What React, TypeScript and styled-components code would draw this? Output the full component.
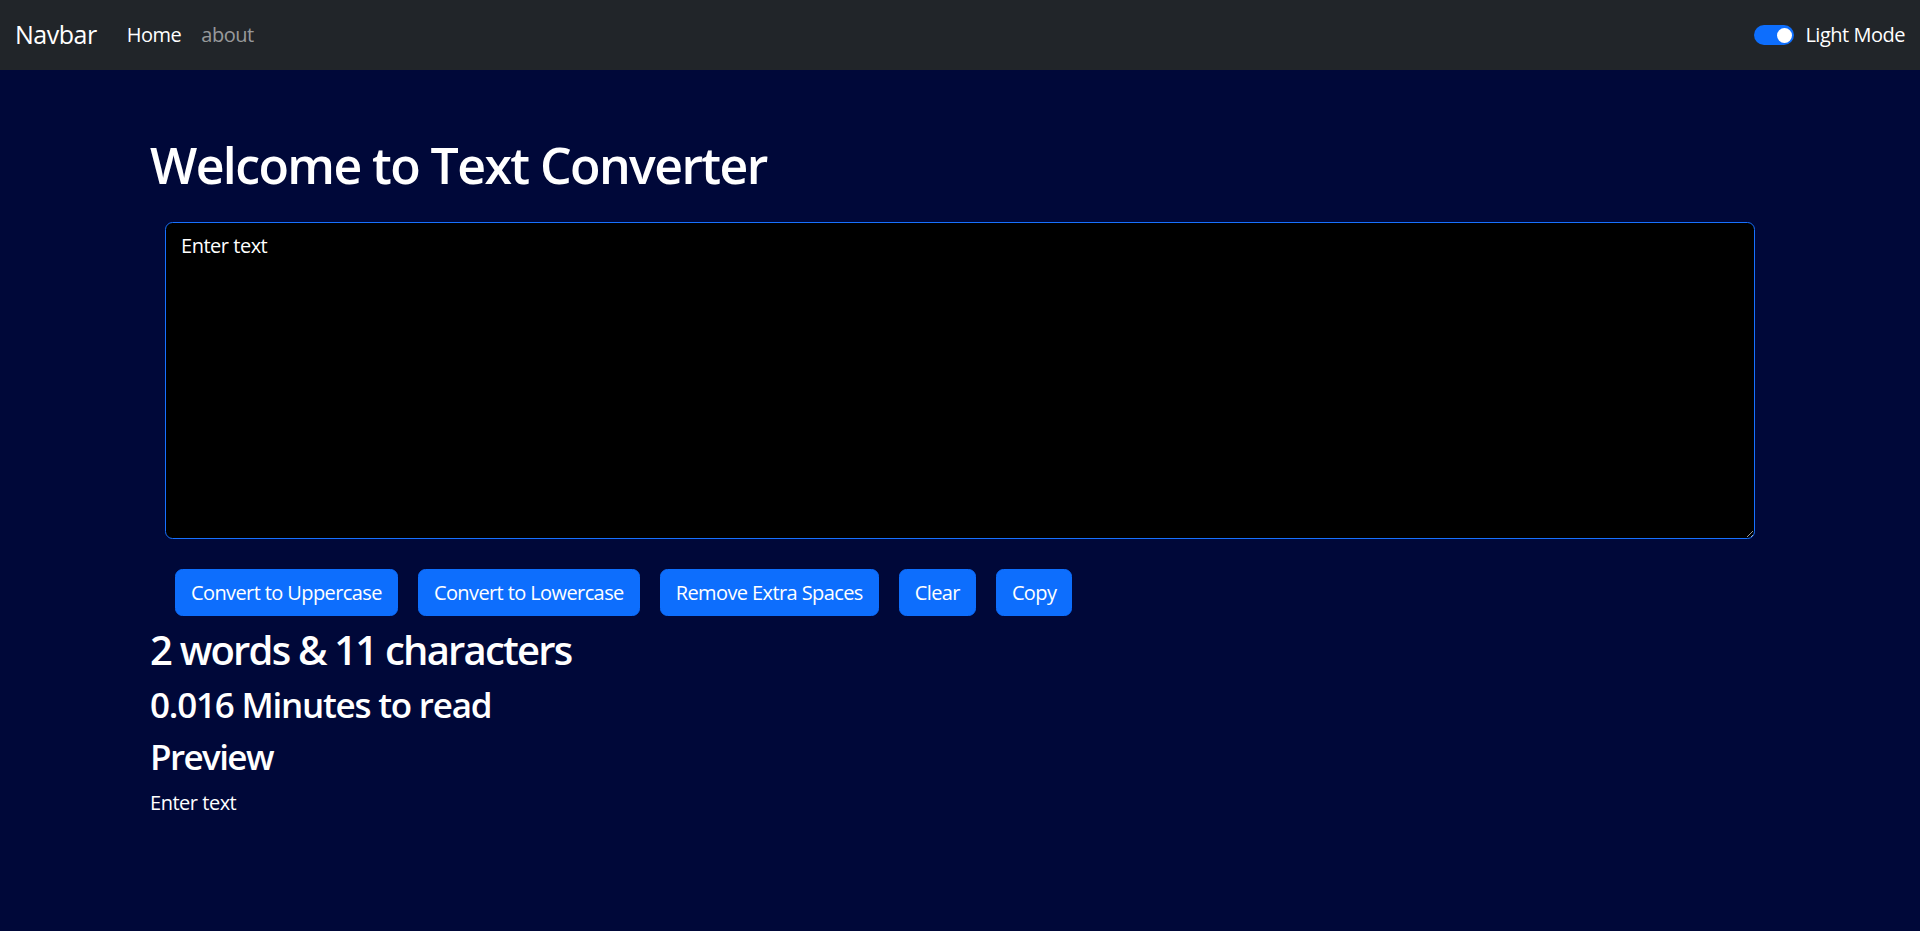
import React from 'react';
import styled, { createGlobalStyle } from 'styled-components';

const GlobalStyle = createGlobalStyle`
  html, body { margin: 0; padding: 0; background: #000839; }
  body {
    font-family: "Open Sans", "Noto Sans", sans-serif;
    color: #fff;
    min-height: 100vh;
    letter-spacing: -0.03em;
  }
  *, *::before, *::after { box-sizing: border-box; }
`;

const Nav = styled.nav`
  display: flex;
  align-items: center;
  justify-content: space-between;
  height: 70px;
  padding: 0 15px;
  background: #212529;
`;

const NavLeft = styled.div`
  display: flex;
  align-items: center;
`;

const Brand = styled.a`
  font-size: 25px;
  line-height: 1.5;
  color: #fff;
  margin-right: 20px;
  text-decoration: none;
`;

const NavLink = styled.a<{ $active?: boolean }>`
  font-size: 20px;
  line-height: 1.5;
  padding: 0 10px;
  color: ${(p) => (p.$active ? '#fff' : 'rgba(255,255,255,0.55)')};
  text-decoration: none;
`;

const SwitchLabel = styled.label`
  display: flex;
  align-items: center;
  gap: 11px;
  font-size: 20px;
  line-height: 1.5;
  color: #fff;
`;

const SwitchTrack = styled.span`
  position: relative;
  display: inline-block;
  width: 40px;
  height: 20px;
  border-radius: 10px;
  background: #0d6efd;
`;

const SwitchKnob = styled.span`
  position: absolute;
  top: 2.5px;
  right: 2.5px;
  width: 15px;
  height: 15px;
  border-radius: 50%;
  background: #fff;
`;

const Container = styled.main`
  max-width: 1650px;
  margin: 0 auto;
  padding: 0 15px;
`;

const Title = styled.h1`
  font-size: 50px;
  font-weight: 600;
  line-height: 1.2;
  letter-spacing: -0.032em;
  margin: 65px 0 10px;
`;

const Field = styled.div`
  margin: 27px 15px 0;
`;

const TextArea = styled.textarea`
  display: block;
  width: 100%;
  height: 317px;
  padding: 8px 15px;
  font-family: inherit;
  font-size: 20px;
  line-height: 1.5;
  letter-spacing: inherit;
  color: #fff;
  background: #000;
  border: 1px solid #1771ff;
  border-radius: 7.5px;
  outline: none;
  resize: vertical;
`;

const ButtonRow = styled.div`
  display: flex;
  gap: 20px;
  margin: 30px 0 0 25px;
`;

const Button = styled.button`
  font-family: inherit;
  font-size: 20px;
  line-height: 1.5;
  letter-spacing: -0.03em;
  padding: 7.5px 15px;
  color: #fff;
  background: #0d6efd;
  border: 1px solid #0d6efd;
  border-radius: 7.5px;
  cursor: pointer;
`;

const Heading = styled.h2<{ $size: number; $spacing: number }>`
  font-size: ${(p) => p.$size}px;
  font-weight: 600;
  line-height: 1.2;
  letter-spacing: ${(p) => p.$spacing}em;
  margin: 0 0 10px;
`;

const Stats = styled.section`
  margin-top: 10px;
`;

const Preview = styled.p`
  font-size: 20px;
  line-height: 1.5;
  margin: 0;
`;

export default function App() {
  const text = 'Enter text';
  return (
    <>
      <GlobalStyle />
      <Nav>
        <NavLeft>
          <Brand href="#">Navbar</Brand>
          <NavLink href="#" $active>Home</NavLink>
          <NavLink href="#">about</NavLink>
        </NavLeft>
        <SwitchLabel>
          <SwitchTrack>
            <SwitchKnob />
          </SwitchTrack>
          Light Mode
        </SwitchLabel>
      </Nav>
      <Container>
        <Title>Welcome to Text Converter</Title>
        <Field>
          <TextArea defaultValue={text} />
        </Field>
        <ButtonRow>
          <Button>Convert to Uppercase</Button>
          <Button>Convert to Lowercase</Button>
          <Button>Remove Extra Spaces</Button>
          <Button>Clear</Button>
          <Button>Copy</Button>
        </ButtonRow>
        <Stats>
          <Heading $size={40} $spacing={-0.045}>2 words &amp; 11 characters</Heading>
          <Heading as="h3" $size={35} $spacing={-0.035}>0.016 Minutes to read</Heading>
          <Heading as="h3" $size={35} $spacing={-0.045}>Preview</Heading>
          <Preview>{text}</Preview>
        </Stats>
      </Container>
    </>
  );
}
